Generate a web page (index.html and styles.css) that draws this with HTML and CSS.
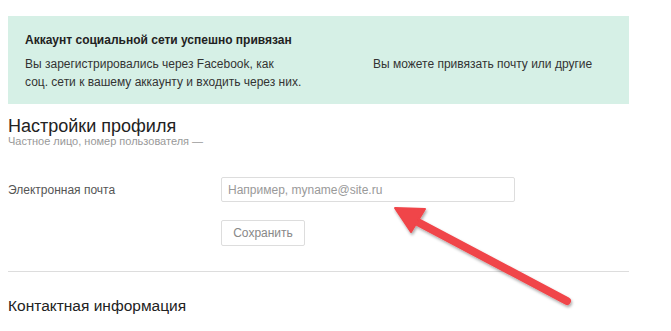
FILE: index.html
```html
<!DOCTYPE html>
<html lang="ru">
<head>
  <meta charset="UTF-8">
  <title>Настройки профиля</title>
  <link rel="stylesheet" href="styles.css">
</head>
<body>

<div class="page">
  <div class="notice">
    <div class="notice-title">Аккаунт социальной сети успешно привязан</div>
    <div class="notice-cols">
      <p>Вы зарегистрировались через Facebook, как<br>соц. сети к вашему аккаунту и входить через них.</p>
      <p>Вы можете привязать почту или другие</p>
    </div>
  </div>

  <h1>Настройки профиля</h1>
  <div class="subtitle">Частное лицо, номер пользователя —</div>

  <div class="form">
    <div class="form-row">
      <label for="email">Электронная почта</label>
      <input type="text" id="email" placeholder="Например, myname@site.ru">
    </div>
    <div class="form-row">
      <span class="spacer"></span>
      <button class="save-btn">Сохранить</button>
    </div>
  </div>

  <hr class="divider">

  <h2>Контактная информация</h2>
</div>

<svg class="arrow" width="671" height="331" viewBox="0 0 671 331">
  <defs>
    <filter id="shadow" x="-20%" y="-20%" width="140%" height="140%">
      <feDropShadow dx="1" dy="2" stdDeviation="1.6" flood-color="#000" flood-opacity="0.35"/>
    </filter>
  </defs>
  <g filter="url(#shadow)" fill="#f04448" stroke="#f04448">
    <line x1="412" y1="219" x2="567" y2="301" stroke-width="8" stroke-linecap="round"/>
    <polygon points="395,208 425,209 411,232" stroke-width="2" stroke-linejoin="round"/>
  </g>
</svg>

</body>
</html>
```

FILE: styles.css
```css
body {
  font-family: "Liberation Sans", Arial, sans-serif;
  background-color: #fff;
  color: #333;
  margin: 0;
  padding: 0;
}

.page {
  width: 621px;
  padding: 16px 0 0 8px;
}

.notice {
  background-color: #d6f0e6;
  padding: 16px 17px 13px;
}

.notice-title {
  font-size: 12px;
  font-weight: bold;
  color: #222;
  line-height: 16px;
}

.notice-cols {
  display: grid;
  grid-template-columns: 348px 1fr;
  margin-top: 7px;
}

.notice-cols p {
  margin: 0;
  font-size: 12px;
  line-height: 18px;
  color: #333;
}

h1 {
  font-size: 18px;
  font-weight: normal;
  color: #222;
  margin: 11px 0 0;
  line-height: 22px;
}

.subtitle {
  font-size: 11px;
  color: #999;
  line-height: 14px;
  margin-top: -3px;
}

.form {
  margin-top: 29px;
}

.form-row {
  display: flex;
  align-items: center;
}

.form-row label,
.form-row .spacer {
  width: 213px;
  font-size: 12px;
  color: #555;
}

#email {
  width: 294px;
  height: 25px;
  box-sizing: border-box;
  border: 1px solid #ddd;
  border-radius: 2px;
  padding: 0 6px;
  font-family: inherit;
  font-size: 12px;
  color: #333;
}

#email::placeholder {
  color: #999;
}

.save-btn {
  margin-top: 18px;
  width: 84px;
  height: 26px;
  background: #fff;
  border: 1px solid #ddd;
  border-radius: 2px;
  font-family: inherit;
  font-size: 12px;
  color: #888;
}

.divider {
  border: none;
  border-top: 1px solid #ddd;
  margin: 25px 0 0;
}

h2 {
  font-size: 15.5px;
  font-weight: normal;
  color: #222;
  margin: 25px 0 0;
  line-height: 18px;
}

.arrow {
  position: absolute;
  top: 0;
  left: 0;
  pointer-events: none;
}
```
